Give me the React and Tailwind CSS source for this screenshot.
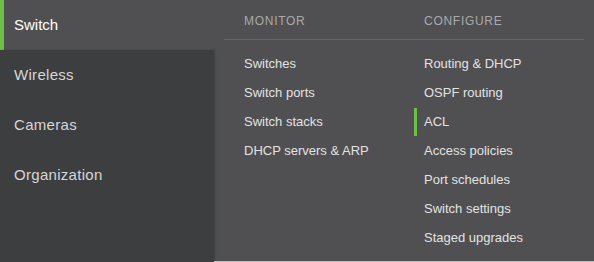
import React from "react";

const monitor = ["Switches", "Switch ports", "Switch stacks", "DHCP servers & ARP"];
const configure = [
  "Routing & DHCP",
  "OSPF routing",
  "ACL",
  "Access policies",
  "Port schedules",
  "Switch settings",
  "Staged upgrades",
];

function Column({ items, active }) {
  return (
    <div className="w-[180px] shrink-0">
      <ul className="pt-[9px]">
        {items.map((item) => (
          <li key={item} className="relative h-[29px] flex items-center pl-[20px] text-[13px] text-[#e2e2e2]">
            {item === active && <span className="absolute left-[10px] top-[1px] w-[3px] h-[28px] bg-[#6ebe4a]" />}
            {item}
          </li>
        ))}
      </ul>
    </div>
  );
}

export default function App() {
  return (
    <div
      className="w-[594px] h-[262px] flex bg-[#505052] overflow-hidden"
      style={{ fontFamily: '"Liberation Sans", Arial, sans-serif' }}
    >
      <aside className="w-[214px] shrink-0 flex flex-col">
        <div className="h-[50px] flex items-center bg-[#505052] border-l-[4px] border-[#6ebe4a] pl-[10px] pt-[1px] text-[15px] text-white">
          Switch
        </div>
        <nav className="flex-1 bg-[#3d3e40] shadow-[1px_0_2px_rgba(0,0,0,0.2)]">
          {["Wireless", "Cameras", "Organization"].map((item) => (
            <div key={item} className="h-[50px] flex items-center pl-[14px] pt-[1px] text-[15px] tracking-[0.02em] text-[#d6d6d6]">
              {item}
            </div>
          ))}
        </nav>
      </aside>

      <section className="flex-1 px-[10px] border-b border-[#b9b9b9]">
        <div className="flex h-[40px] border-b border-[#636365] pt-[12px]">
          <div className="w-[180px] pl-[20px] text-[12px] tracking-[0.06em] text-[#a9a9ab]">MONITOR</div>
          <div className="w-[180px] pl-[20px] text-[12px] tracking-[0.06em] text-[#a9a9ab]">CONFIGURE</div>
        </div>
        <div className="flex">
          <Column items={monitor} />
          <Column items={configure} active="ACL" />
        </div>
      </section>
    </div>
  );
}
